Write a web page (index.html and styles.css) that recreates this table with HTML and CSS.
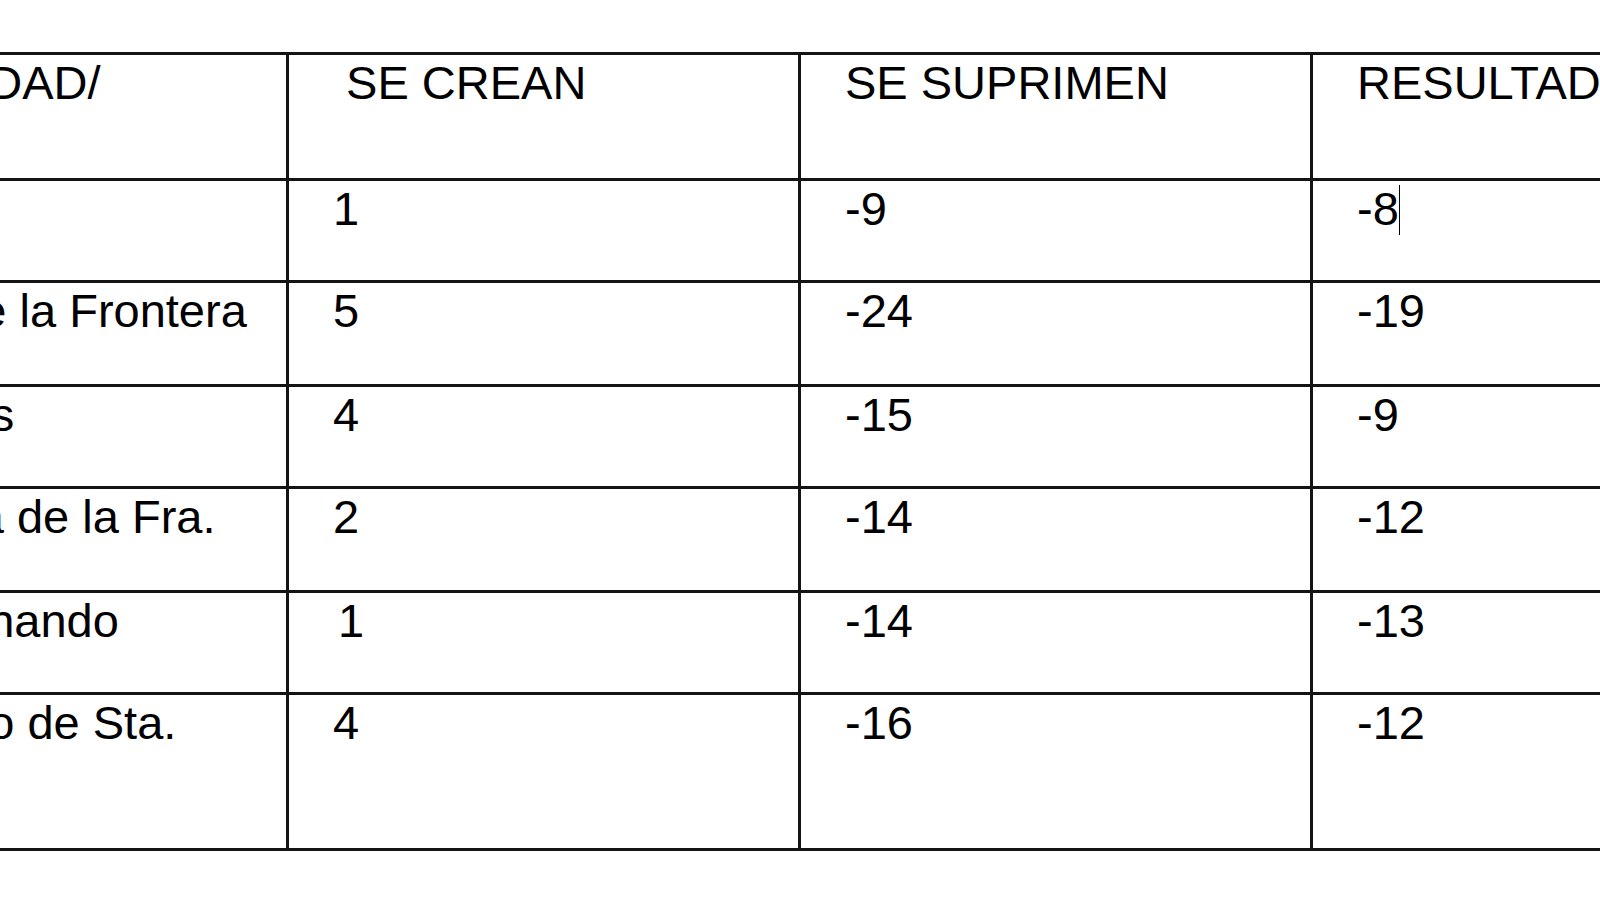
FILE: index.html
```html
<!DOCTYPE html>
<html lang="es">
<head>
<meta charset="utf-8">
<title>Tabla</title>
<link rel="stylesheet" href="styles.css">
</head>
<body>
<div class="page">
  <table class="grid">
    <colgroup>
      <col class="col"><col class="col"><col class="col"><col class="col">
    </colgroup>
    <tr class="row-head">
      <td>LOCALIDAD/</td>
      <td>&nbsp;SE CREAN</td>
      <td>SE SUPRIMEN</td>
      <td>RESULTADO</td>
    </tr>
    <tr class="row-a">
      <td>Cádiz</td>
      <td>1</td>
      <td>-9</td>
      <td>-8<span class="caret"></span></td>
    </tr>
    <tr class="row-b">
      <td>Arcos de la Frontera</td>
      <td>5</td>
      <td>-24</td>
      <td>-19</td>
    </tr>
    <tr class="row-a">
      <td>Algeciras</td>
      <td>4</td>
      <td>-15</td>
      <td>-9</td>
    </tr>
    <tr class="row-b">
      <td>Chiclana de la Fra.</td>
      <td>2</td>
      <td>-14</td>
      <td>-12</td>
    </tr>
    <tr class="row-a">
      <td>San Fernando</td>
      <td><span class="nudge">1</span></td>
      <td>-14</td>
      <td>-13</td>
    </tr>
    <tr class="row-last">
      <td>El Puerto de Sta.<br>María</td>
      <td>4</td>
      <td>-16</td>
      <td>-12</td>
    </tr>
  </table>
</div>
</body>
</html>
```
FILE: styles.css
```css
html, body {
  margin: 0;
  padding: 0;
  background: #ffffff;
}
body {
  width: 1600px;
  height: 900px;
  overflow: hidden;
}
.page {
  padding-top: 52px;
  margin-left: -226px;
}
.grid {
  border-collapse: collapse;
  table-layout: fixed;
  width: 2048px;
  font-family: "Liberation Sans", Arial, sans-serif;
  font-size: 47px;
  line-height: normal;
  color: #000000;
}
.col {
  width: 512px;
}
.grid td {
  border: 3px solid #141414;
  padding: 0 0 0 44px;
  vertical-align: top;
  white-space: nowrap;
}
.row-head { height: 126px; }
.row-a { height: 102px; }
.row-b { height: 104px; }
.row-last { height: 156px; }
.nudge {
  padding-left: 5px;
}
.caret {
  display: inline-block;
  width: 1px;
  height: 50px;
  background: #000000;
  vertical-align: -10px;
}
```
